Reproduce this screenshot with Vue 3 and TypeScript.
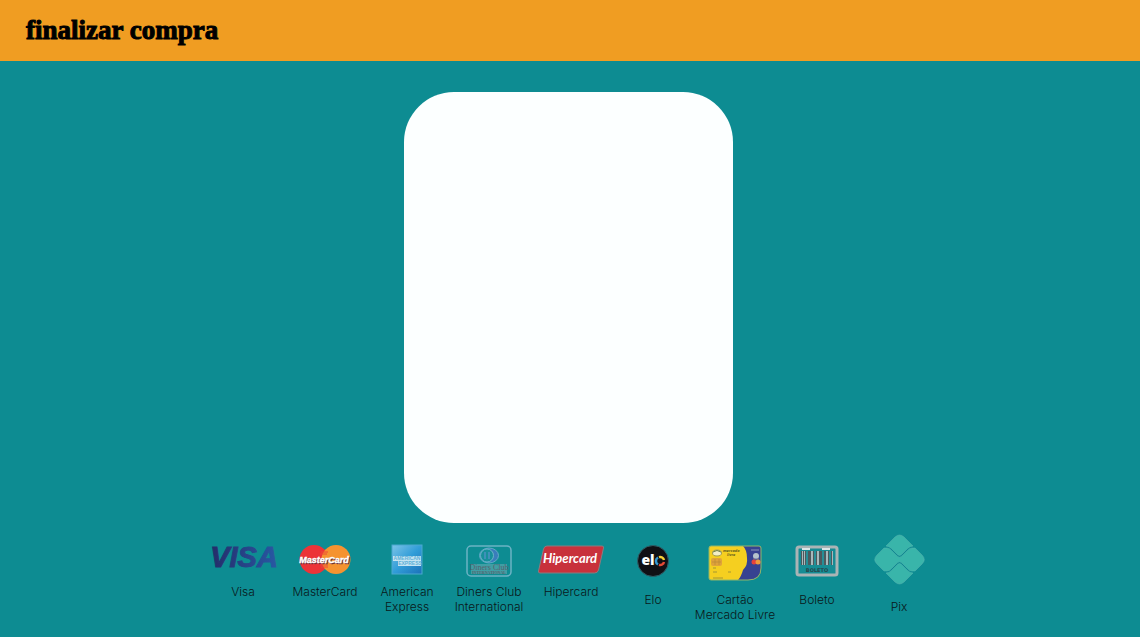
<script setup lang="ts">
type LogoName =
  | 'visa'
  | 'mastercard'
  | 'amex'
  | 'diners'
  | 'hipercard'
  | 'elo'
  | 'mercado'
  | 'boleto'
  | 'pix'

interface PaymentMethod {
  logo: LogoName
  lines: string[]
  size: 'short' | 'medium' | 'tall'
}

const methods: PaymentMethod[] = [
  { logo: 'visa', lines: ['Visa'], size: 'short' },
  { logo: 'mastercard', lines: ['MasterCard'], size: 'short' },
  { logo: 'amex', lines: ['American', 'Express'], size: 'short' },
  { logo: 'diners', lines: ['Diners Club', 'International'], size: 'short' },
  { logo: 'hipercard', lines: ['Hipercard'], size: 'short' },
  { logo: 'elo', lines: ['Elo'], size: 'medium' },
  { logo: 'mercado', lines: ['Cartão', 'Mercado Livre'], size: 'medium' },
  { logo: 'boleto', lines: ['Boleto'], size: 'medium' },
  { logo: 'pix', lines: ['Pix'], size: 'tall' },
]

// [x, width] of each bar on the boleto icon
const bars: number[][] = [
  [6, 1], [8, 1], [10, 1], [13, 3], [18, 1], [21, 1], [24, 3], [29, 2], [33, 1], [36, 1],
]
</script>

<template>
  <div class="page">
    <header class="topbar">
      <h1>finalizar compra</h1>
    </header>

    <main>
      <section class="panel" aria-label="finalizar compra"></section>
    </main>

    <footer>
      <ul class="methods">
        <li v-for="m in methods" :key="m.logo" :class="['method', m.size]">
          <div class="logo">
            <svg v-if="m.logo === 'visa'" width="66" height="24" viewBox="0 0 66 24" aria-hidden="true">
              <defs>
                <linearGradient id="visa-blue" x1="0" y1="0" x2="1" y2="0">
                  <stop offset="0" stop-color="#252b68" />
                  <stop offset="1" stop-color="#2859a4" />
                </linearGradient>
              </defs>
              <text x="34" y="22" text-anchor="middle" class="visa-text" fill="url(#visa-blue)" stroke="url(#visa-blue)">VISA</text>
            </svg>

            <svg v-else-if="m.logo === 'mastercard'" width="52" height="30" viewBox="0 0 52 30" aria-hidden="true">
              <circle cx="15" cy="14.500" r="14.500" fill="#ec3338" />
              <circle cx="37" cy="14.500" r="14.500" fill="#f59330" />
              <path d="M22 7h7M21 9h7M21 20h8M22 22h7" stroke="#ec4a35" stroke-width="1" />
              <text x="26" y="19" text-anchor="middle" class="mc-text" fill="#6b3038" stroke="#6b3038">MasterCard</text>
              <text x="25" y="18" text-anchor="middle" class="mc-text" fill="#ffffff" stroke="#ffffff">MasterCard</text>
            </svg>

            <svg v-else-if="m.logo === 'amex'" width="30" height="29" viewBox="0 0 30 29" aria-hidden="true">
              <defs>
                <linearGradient id="amex-blue" x1="0" y1="0" x2="1" y2="1">
                  <stop offset="0" stop-color="#7cc4e8" />
                  <stop offset="0.500" stop-color="#319dd8" />
                  <stop offset="1" stop-color="#1b70b8" />
                </linearGradient>
              </defs>
              <rect width="30" height="29" fill="url(#amex-blue)" stroke="#4aa8cf" />
              <path d="M1 11h28v5H1zM6 16h23v5H6z" fill="#c4e4f2" />
              <text x="15" y="15" text-anchor="middle" class="amex-text" fill="#5fb0d8">AMERICAN</text>
              <text x="18" y="20" text-anchor="middle" class="amex-text" fill="#5fb0d8">EXPRESS</text>
            </svg>

            <svg v-else-if="m.logo === 'diners'" width="46" height="32" viewBox="0 0 46 32" aria-hidden="true">
              <rect x="1" y="1" width="44" height="30" rx="4" fill="none" stroke="#6bb2c4" stroke-width="1.500" />
              <ellipse cx="23" cy="10.500" rx="9.500" ry="7.500" fill="#3a7dbc" stroke="#62abc6" />
              <circle cx="21" cy="10.500" r="6.500" fill="#178f9b" stroke="#68b4c6" />
              <path d="M19 7v7M23 7v7" stroke="#4c91c2" stroke-width="1.500" />
              <path d="M5 19h36v10H5z" fill="#7fb4bb" fill-opacity="0.450" />
              <text x="23" y="25" text-anchor="middle" class="diners-text" fill="#56616c">Diners Club</text>
              <text x="23" y="29" text-anchor="middle" class="diners-small" fill="#56616c">INTERNATIONAL</text>
            </svg>

            <svg v-else-if="m.logo === 'hipercard'" width="68" height="29" viewBox="0 0 68 29" aria-hidden="true">
              <path
                d="M10 1h55q2 0 1.500 2l-5 22q-.700 3-4 3H3q-2 0-1.500-2l5-22Q7.300 1 10 1z"
                fill="#c8313c"
                stroke="#8a7c80"
              />
              <text x="33" y="18" text-anchor="middle" class="hiper-text" fill="#ffffff">Hipercard</text>
            </svg>

            <svg v-else-if="m.logo === 'elo'" width="32" height="32" viewBox="0 0 32 32" aria-hidden="true">
              <circle cx="16" cy="16" r="15.500" fill="#101015" stroke="#315e67" />
              <text x="11" y="20" text-anchor="middle" class="elo-text" fill="#ffffff">el</text>
              <g fill="none" stroke-width="2.500">
                <path d="M21 19.500A4 4 0 0 1 21 12.500" stroke="#3598d3" />
                <path d="M22 12.100a4 4 0 0 1 5 3" stroke="#f5cf36" />
                <path d="M27 17A4 4 0 0 1 22 19.900" stroke="#e34a36" />
              </g>
            </svg>

            <svg v-else-if="m.logo === 'mercado'" width="54" height="36" viewBox="0 0 54 36" aria-hidden="true">
              <path d="M3 1h48q2 0 2 2v20q0 12-13 12H3q-2 0-2-2V3q0-2 2-2z" fill="#f5cf20" />
              <path d="M35 1h16q2 0 2 2v20q0 12-13 12H30q3-3 5-10 5-5 4-12 0-8-4-12z" fill="#374291" />
              <path d="M3 1h48q2 0 2 2v20q0 12-13 12H3q-2 0-2-2V3q0-2 2-2z" fill="none" stroke="#91b66b" />
              <ellipse cx="9" cy="8" rx="4.500" ry="3" fill="#f2eec7" stroke="#a09c50" />
              <path d="M5 7q4-3 8 0" fill="none" stroke="#71834b" />
              <text x="15" y="7" class="card-text" fill="#66601f">mercado</text>
              <text x="19" y="11" class="card-text" fill="#66601f">livre</text>
              <rect x="3" y="13" width="11" height="8" rx="2" fill="#dfa33a" />
              <path d="M4 17h9M7 14v6M11 14v6" stroke="#ba8936" stroke-width=".700" />
              <path d="M5 23h3M5 27h4M20 27h3M5 33h10" stroke="#a49732" />
              <path d="M43 5h8" stroke="#8b93b8" />
              <circle cx="48" cy="11" r="3" fill="#b6c4cc" />
              <path d="M45 14h6" stroke="#747b9d" />
              <circle cx="46" cy="17" r="2.500" fill="#e6423c" />
              <circle cx="50" cy="17" r="2.500" fill="#ed9a3d" />
            </svg>

            <svg v-else-if="m.logo === 'boleto'" width="44" height="32" viewBox="0 0 44 32" aria-hidden="true">
              <rect x="2" y="2" width="40" height="28" rx="2" fill="#168c94" stroke="#aab4b5" stroke-width="3" />
              <path d="M7 4h8M27 4h8" stroke="#dce6e7" stroke-width="2" />
              <path d="M6 6h32v14H6z" fill="#a8b9bc" />
              <path d="M11 6h2v14h-2zM19 6h2v14h-2zM27 6h2v14h-2zM34 6h2v14h-2z" fill="#278f97" />
              <rect v-for="b in bars" :key="b[0]" :x="b[0]" y="6" :width="b[1]" height="14" fill="#4c5a5e" />
              <text x="22" y="27" text-anchor="middle" class="boleto-text" fill="#26464b">BOLETO</text>
            </svg>

            <svg v-else width="51" height="51" viewBox="0 0 51 51" aria-hidden="true">
              <g fill="#39b5aa" stroke="#5ab5b0" stroke-width=".500">
                <path d="M12 12 21 3q4.500-4 9 0l9 9q-3 0-5.500 2.500l-6 6q-2 2-4 0l-6-6Q15 12 12 12z" />
                <path d="M12 39 21 48q4.500 4 9 0l9-9q-3 0-5.500-2.500l-6-6q-2-2-4 0l-6 6Q15 39 12 39z" />
                <path
                  d="M10 14h3q2.500 0 4.500 2.500L23 22q2.500 2.500 5 0l5.500-5.500Q35.500 14 38 14h3l7 7q4.500 4.500 0 9l-7 7h-3q-2.500 0-4.500-2.500L28 29q-2.500-2.500-5 0l-5.500 5.500Q15.500 37 13 37h-3l-7-7q-4.500-4.500 0-9z"
                />
              </g>
            </svg>
          </div>
          <p>
            <span v-for="line in m.lines" :key="line">{{ line }}</span>
          </p>
        </li>
      </ul>
    </footer>
  </div>
</template>

<style>
body {
  margin: 0;
  background: #0d8c92;
}
</style>

<style scoped>
.page {
  display: flex;
  flex-direction: column;
  min-height: 100vh;
  background: #0d8c92;
  font-family: Inter, "Open Sans", sans-serif;
}

.topbar {
  padding: 12px 26px 13px;
  background: #f09d22;
}

h1 {
  margin: 0;
  font-family: "Liberation Serif", serif;
  font-size: 27px;
  font-weight: 700;
  line-height: 36px;
  color: #000000;
  -webkit-text-stroke: 1px #000000;
}

main {
  display: flex;
  justify-content: center;
  padding: 31px 3px 11px 0;
}

.panel {
  width: 329px;
  max-width: 90%;
  min-height: 431px;
  border-radius: 50px;
  background: #fcffff;
}

.methods {
  display: grid;
  grid-template-columns: repeat(9, 82px);
  justify-content: center;
  margin: 0;
  padding: 0 0 0 2px;
  list-style: none;
}

.method {
  display: flex;
  flex-direction: column;
  align-items: center;
  padding-top: 11px;
}

.logo {
  height: 39px;
}

.medium .logo {
  height: 47px;
}

.tall {
  padding-top: 0;
}

.tall .logo {
  height: 65px;
}

svg {
  display: block;
  overflow: visible;
}

p {
  margin: 0;
  font-size: 12px;
  font-weight: 300;
  line-height: 15px;
  text-align: center;
  color: #0a1719;
}

p span {
  display: block;
  white-space: nowrap;
}

.visa-text {
  font: italic 700 29px "Liberation Sans", sans-serif;
}

.mc-text {
  font: italic 700 9px "Liberation Sans", sans-serif;
  stroke-width: 0.4;
}

.amex-text {
  font: 700 5px "Liberation Sans", sans-serif;
}

.diners-text {
  font: 400 8px "Liberation Serif", serif;
}

.diners-small {
  font: 700 4px "Liberation Serif", serif;
}

.hiper-text {
  font: italic 700 13px Lato, sans-serif;
}

.elo-text {
  font: 800 14px "Open Sans", sans-serif;
}

.card-text {
  font: italic 700 4px "Open Sans", sans-serif;
}

.boleto-text {
  font: 700 5px "DejaVu Sans", sans-serif;
}
</style>
